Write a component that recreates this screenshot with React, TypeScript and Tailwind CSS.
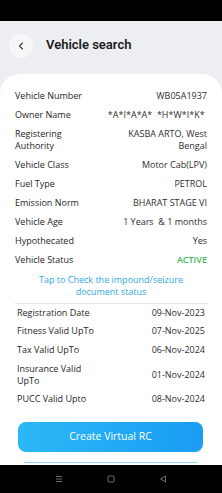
import { ChevronLeft } from 'lucide-react';

type Row = { label: string; value: string; valueClass?: string };

const vehicleRows: Row[] = [
  { label: 'Vehicle Number', value: 'WB05A1937' },
  { label: 'Owner Name', value: '*A*I*A*A*  *H*W*I*K* ' },
  { label: 'Registering Authority', value: 'KASBA ARTO, West Bengal' },
  { label: 'Vehicle Class', value: 'Motor Cab(LPV)' },
  { label: 'Fuel Type', value: 'PETROL' },
  { label: 'Emission Norm', value: 'BHARAT STAGE VI' },
  { label: 'Vehicle Age', value: '1 Years  & 1 months' },
  { label: 'Hypothecated', value: 'Yes' },
  { label: 'Vehicle Status', value: 'ACTIVE', valueClass: 'text-[#3dbb55] font-semibold' },
];

const validityRows: Row[] = [
  { label: 'Registration Date', value: '09-Nov-2023' },
  { label: 'Fitness Valid UpTo', value: '07-Nov-2025' },
  { label: 'Tax Valid UpTo', value: '06-Nov-2024' },
  { label: 'Insurance Valid UpTo', value: '01-Nov-2024' },
  { label: 'PUCC Valid Upto', value: '08-Nov-2024' },
];

function InfoRow({ row, tight }: { row: Row; tight?: boolean }) {
  return (
    <div
      className={`grid grid-cols-[82px_1fr] items-center gap-x-1 leading-[12px] ${
        tight ? 'py-[3.3px]' : 'py-[3.5px]'
      }`}
    >
      <span className="text-[#262626]">{row.label}</span>
      <span className={`text-right whitespace-pre-wrap ${row.valueClass ?? 'text-[#2e2e2e]'}`}>
        {row.value}
      </span>
    </div>
  );
}

export default function App() {
  return (
    <div
      className="w-[222px] h-[493px] flex flex-col overflow-hidden bg-[#eceef1]"
      style={{ fontFamily: '"Open Sans", "Noto Sans", sans-serif' }}
    >
      {/* status bar */}
      <div className="h-[21px] shrink-0 bg-black" />

      {/* header */}
      <div className="h-[53px] shrink-0 flex items-start pt-[13px] pl-[9px] gap-[13px]">
        <button className="w-[24px] h-[24px] rounded-full bg-[#f6f7f9] flex items-center justify-center">
          <ChevronLeft size={12} strokeWidth={2.2} className="text-[#333]" />
        </button>
        <h1
          className="text-[13px] font-semibold text-[#1b1b1b] leading-[22px]"
          style={{ fontFamily: 'Roboto, "Noto Sans", sans-serif' }}
        >
          Vehicle search
        </h1>
      </div>

      {/* card */}
      <div className="flex-1 min-h-0 overflow-hidden bg-white rounded-t-[20px] pt-[12.5px] text-[9px]">
        <div className="px-[15px]">
          {vehicleRows.map((r) => (
            <InfoRow key={r.label} row={r} />
          ))}
        </div>

        <p className="mt-[4.5px] px-[20px] text-center leading-[12px] text-[#2fa8e3]">
          Tap to Check the impound/seizure
          <br />
          document status
        </p>

        <div className="mx-[15px] mt-[4.5px] h-px bg-[#e3e6ea]" />

        <div className="px-[17px]">
          {validityRows.map((r) => (
            <InfoRow key={r.label} row={r} tight />
          ))}
        </div>

        <button className="mt-[13.5px] ml-[18px] w-[185px] h-[30px] rounded-[8px] bg-gradient-to-r from-[#2cb8f7] to-[#1a9cf3] text-white text-[10.5px] font-medium">
          Create Virtual RC
        </button>

        <div className="mt-[10px] ml-[24px] w-[173px] h-px bg-[#8fd3f6]" />
      </div>

      {/* nav bar */}
      <div className="h-[28px] shrink-0 bg-black flex items-center justify-center gap-[44px] text-[#6d6d6d]">
        <svg width="8" height="8" viewBox="0 0 8 8" fill="none" stroke="currentColor" strokeWidth="1">
          <path d="M1 1.5h6M1 4h6M1 6.5h6" />
        </svg>
        <svg width="8" height="8" viewBox="0 0 8 8" fill="none" stroke="currentColor" strokeWidth="1">
          <rect x="1" y="1" width="6" height="6" rx="1" />
        </svg>
        <svg width="8" height="8" viewBox="0 0 8 8" fill="none" stroke="currentColor" strokeWidth="1">
          <path d="M6.5 1L1.5 4l5 3z" />
        </svg>
      </div>
    </div>
  );
}
